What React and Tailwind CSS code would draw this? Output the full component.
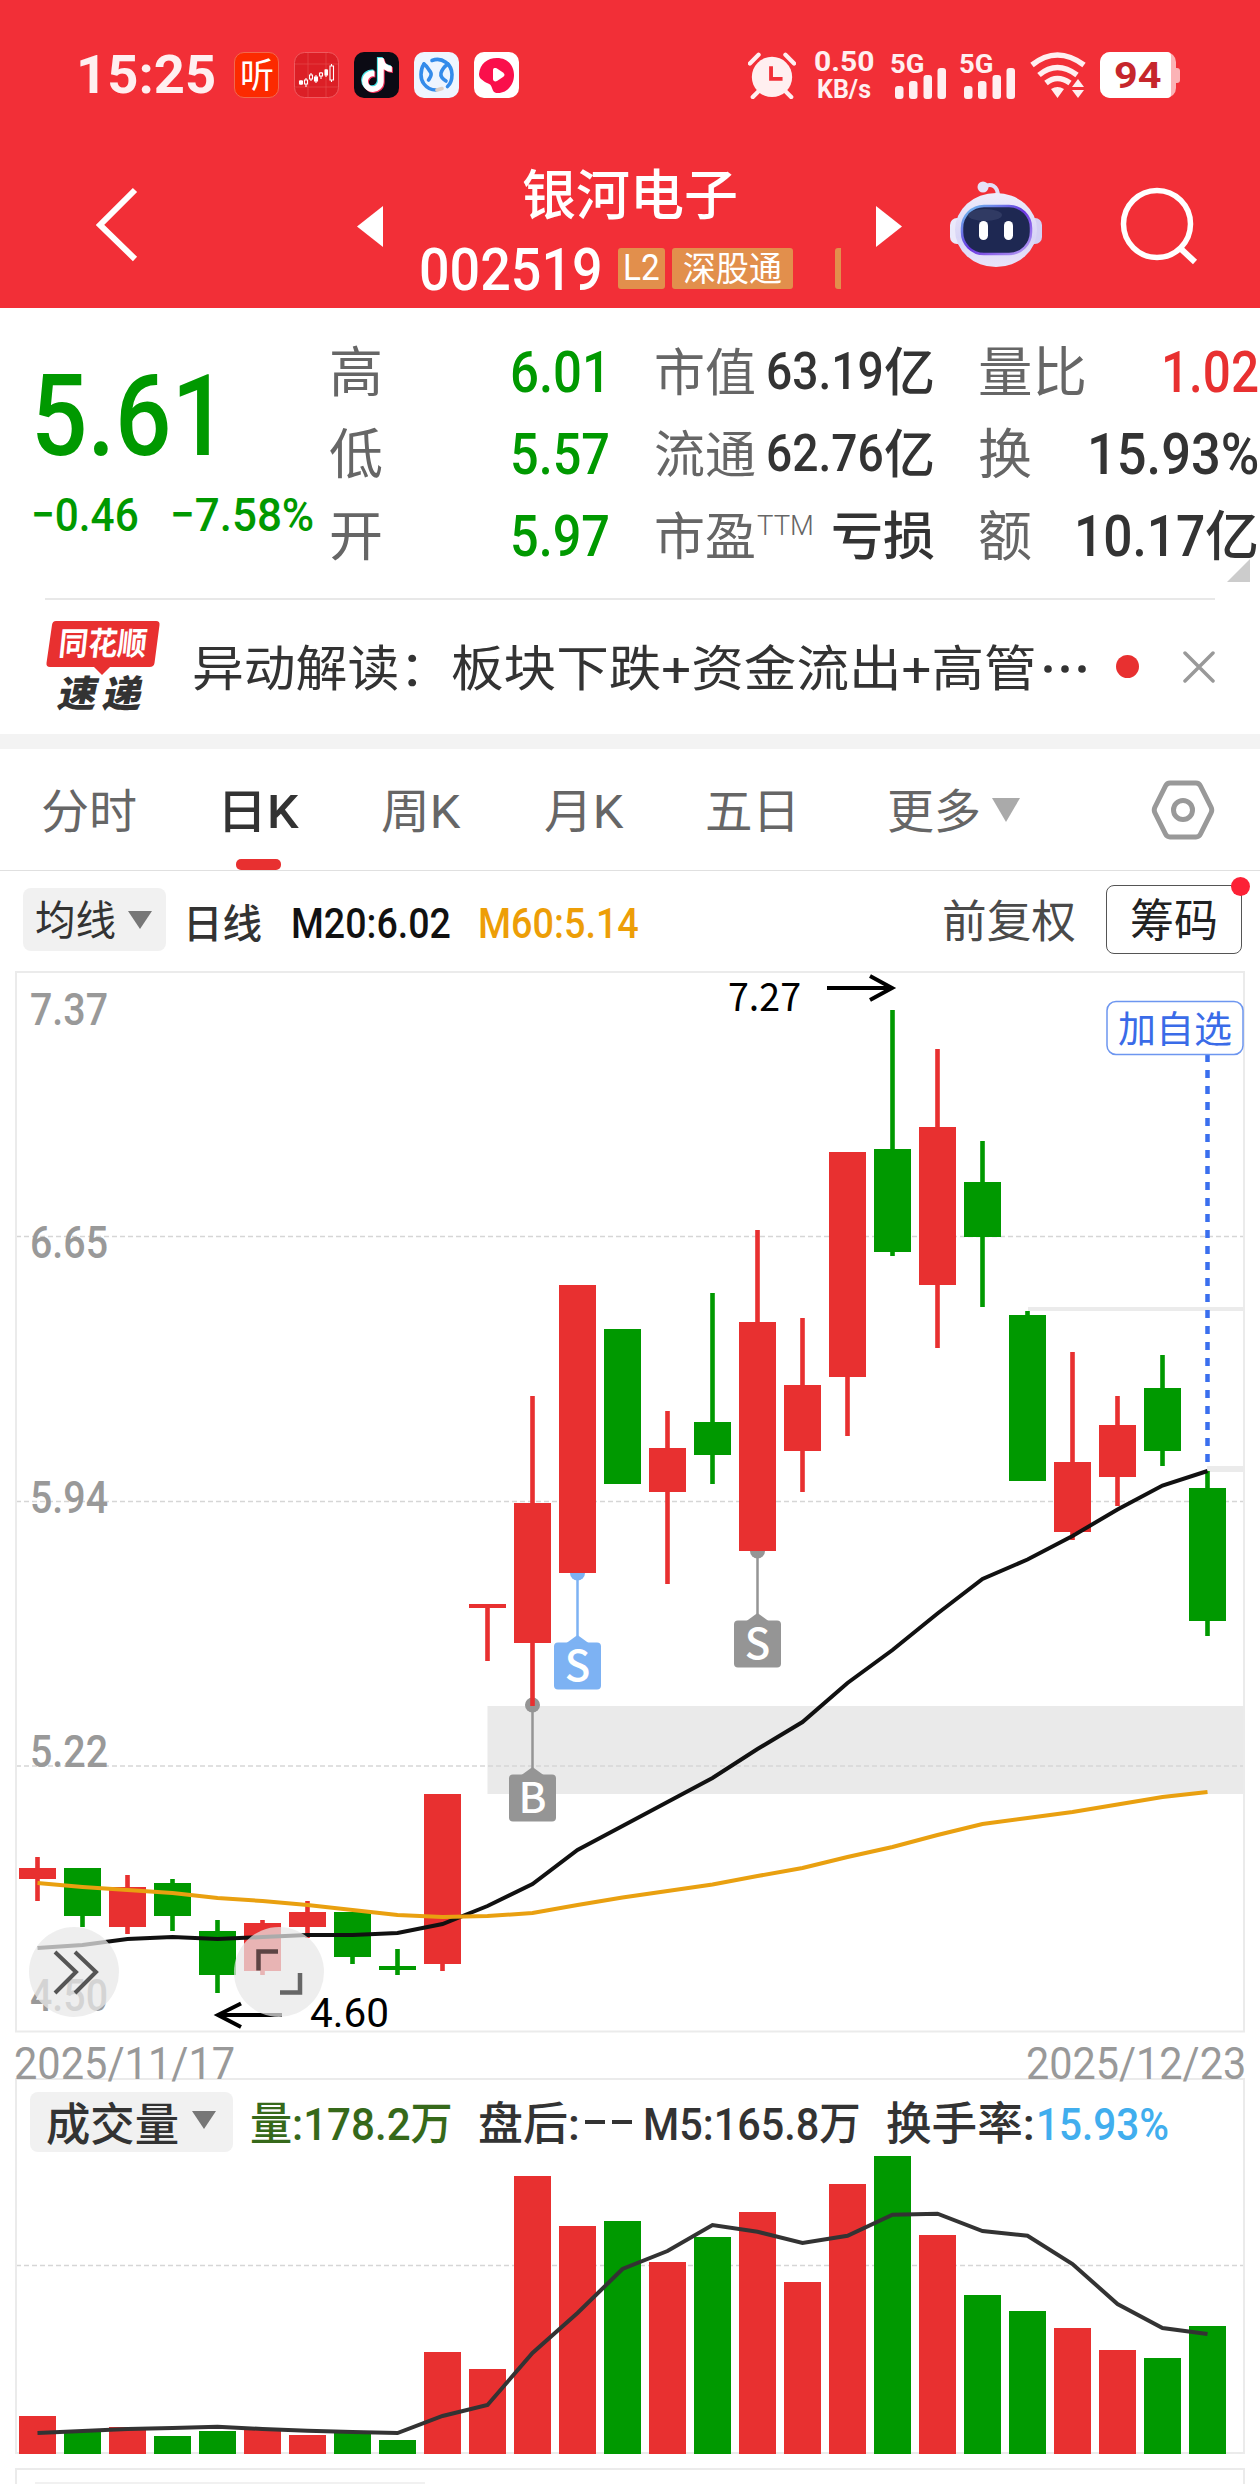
import { useLayoutEffect, useRef } from 'react'
import { FaTiktok } from 'react-icons/fa6'

const RED = '#e83030'
const GREEN = '#009900'

/* [up, bodyTop, bodyBottom, high, low] */
const CANDLES = [
  [1, 1868, 1879, 1857, 1901],
  [0, 1868, 1916, 1868, 1927],
  [1, 1887, 1927, 1875, 1934],
  [0, 1883, 1916, 1879, 1931],
  [0, 1931, 1975, 1920, 1993],
  [1, 1923, 1971, 1920, 1975],
  [1, 1912, 1927, 1901, 1938],
  [0, 1912, 1957, 1912, 1964],
  [0, 1966, 1970, 1949, 1975],
  [1, 1794, 1964, 1794, 1971],
  [1, 1604, 1608, 1604, 1661],
  [1, 1503, 1643, 1396, 1706],
  [1, 1285, 1573, 1285, 1573],
  [0, 1329, 1484, 1329, 1484],
  [1, 1448, 1492, 1411, 1584],
  [0, 1422, 1455, 1293, 1484],
  [1, 1322, 1551, 1230, 1551],
  [1, 1385, 1451, 1318, 1492],
  [1, 1152, 1377, 1152, 1436],
  [0, 1149, 1252, 1010, 1256],
  [1, 1127, 1285, 1049, 1348],
  [0, 1182, 1237, 1141, 1307],
  [0, 1315, 1481, 1311, 1481],
  [1, 1462, 1532, 1352, 1540],
  [1, 1425, 1477, 1396, 1506],
  [0, 1388, 1451, 1355, 1466],
  [0, 1488, 1621, 1471, 1636],
]

const MA20 = [1948, 1945, 1939, 1937, 1939, 1937, 1935, 1935, 1933, 1924, 1906, 1884, 1850, 1826, 1802, 1778, 1749, 1722, 1683, 1650, 1613.5, 1579, 1559.5, 1536, 1509.5, 1485.5, 1471]
const MA60 = [1883, 1887, 1890, 1893, 1898, 1901, 1905, 1910, 1915, 1917, 1916, 1913, 1905, 1897.5, 1891, 1884.5, 1876, 1868, 1857, 1847, 1835, 1824, 1818, 1812, 1804.5, 1797, 1792]
const VOLUME = [2416, 2432, 2427, 2436, 2431, 2430, 2435, 2433, 2440, 2352, 2369, 2176, 2226, 2221, 2262, 2237, 2212, 2282, 2184, 2156, 2235, 2295, 2311, 2328, 2350, 2358, 2326]
const VOL_MA5 = [2433, 2431, 2429, 2428, 2426.7, 2429, 2430.7, 2432, 2433, 2416, 2405, 2353, 2313, 2269, 2251, 2225, 2231.7, 2243, 2235.7, 2214.7, 2213.7, 2231, 2235.7, 2264, 2304, 2328, 2334]

const cx = i => 37.5 + 45 * i
const toPoints = ys => ys.map((y, i) => `${cx(i)},${y}`).join(' ')

/* Condenses or stretches one line of text to the width of its box */
function Fit({ className, children }) {
  const box = useRef(null)
  const line = useRef(null)

  useLayoutEffect(() => {
    const k = box.current.clientWidth / line.current.offsetWidth
    line.current.style.transform = `scaleX(${k})`
  }, [children])

  return (
    <span ref={box} className={`block shrink-0 ${className}`}>
      <span ref={line} className="inline-block origin-left whitespace-nowrap">{children}</span>
    </span>
  )
}

function Signal() {
  return (
    <div className="relative w-[55px] h-[46px]">
      <Fit className="w-[34px] -ml-[2px] text-[25px] font-bold">5G</Fit>
      <svg className="absolute left-0 top-0" width="55" height="48" fill="#ffeff0">
        <rect x="3" y="34" width="8.5" height="13" rx="3" />
        <rect x="17" y="29" width="8.5" height="18" rx="3" />
        <rect x="31.5" y="23" width="8.5" height="24" rx="3" />
        <rect x="45.5" y="16" width="8.5" height="31" rx="3" />
      </svg>
    </div>
  )
}

function StatusBar() {
  return (
    <div className="flex items-center h-[52px] mt-[49px] pl-[76px] text-[#ffeff0]">
      <Fit className="w-[140px] text-[54px] font-bold">15:25</Fit>

      <div className="flex ml-[18px] gap-[15px]">
        <div className="flex items-center justify-center w-[45px] h-[46px] rounded-[10px] bg-[#fc2a00] border border-[#f2684e]">
          <Fit className="w-[34px] pt-[2px] text-[35px] text-white">听</Fit>
        </div>
        <svg width="45" height="46" viewBox="0 0 45 46">
          <rect x=".5" y=".5" width="44" height="45" rx="10" fill="#dc1f26" stroke="#ef5a5f" />
          <path d="M1 12h43M1 35h43M14 1v44M32 1v44" stroke="#e5474c" strokeWidth=".7" />
          <g stroke="#fff" strokeWidth="1.1" fill="#dc1f26">
            <path d="M7 28v5M12 26v9M17 21v8M22 23v8M27 20v7M32 17v8M37.500 12v18" />
            <path d="M5.500 29h3v3h-3zM20.500 25h3v4h-3zM31 18h2.500v5H31z" fill="#fff" />
            <path d="M10.500 28h3v4h-3zM15.500 23h3v4h-3zM25.500 21h3v3h-3zM36 14h3.500v14H36z" />
          </g>
        </svg>
        <div className="relative w-[45px] h-[46px] rounded-[10px] bg-[#0b0a14]">
          <FaTiktok size={34} className="absolute left-[5px] top-[5px] text-[#45e4e6]" />
          <FaTiktok size={34} className="absolute left-[7px] top-[7px] text-[#f5305a]" />
          <FaTiktok size={34} className="absolute left-[6px] top-[6px] text-white" />
        </div>
        <svg width="45" height="46" viewBox="0 0 45 46" fill="none" strokeWidth="3.600" strokeLinecap="round">
          <rect width="45" height="46" rx="10" fill="#eef5ff" />
          <path d="M18 8.500c10-4 20 4 20 14 0 5-1 9-4.500 12M10 12c-4 6-4 15 0 20 3 4 7 6 12 6" stroke="#348bea" />
          <path d="M10 12c3 2 4 5 6.500 8 2 3 0 5-2 8M34 12c-3 2-6 6-7 9-1 4 2 6 5 8" stroke="#348bea" />
          <path d="M23 38l5-1.500" stroke="#dccfc5" />
        </svg>
        <svg width="45" height="46" viewBox="0 0 45 46">
          <rect width="45" height="46" rx="10" fill="#fff" />
          <path d="M23 6c11 0 17 8 17 17 0 10-7 18-16 18-4 0-5-2-6-5-1-4-3-4-7-6-4-3-6-4-6-8C6 12 13 6 23 6z" fill="#fa0f4b" />
          <path d="M19 18c0-2 2-2.500 4-1.500l6 4c2 1.500 2 3 0 4.500l-6 4c-2 1-4 0-4-2z" fill="#fff" />
        </svg>
      </div>

      <svg className="ml-[229px]" width="48" height="48" viewBox="0 0 50 48" fill="#ffeff0">
        <ellipse cx="25" cy="26" rx="21" ry="21" />
        <path d="M2 12L11 3M48 12L39 3M11 41l-6 6M39 41l6 6" stroke="#ffeff0" strokeWidth="4.500" strokeLinecap="round" />
        <path d="M24 15v13h12" fill="none" stroke="#f22f37" strokeWidth="4" />
      </svg>

      <div className="flex flex-col items-center gap-[4px] ml-[18px] pt-[2px]">
        <Fit className="w-[60px] text-[28px] leading-[24px] font-bold">0.50</Fit>
        <Fit className="w-[54px] text-[25px] leading-[24px] font-bold">KB/s</Fit>
      </div>

      <div className="flex gap-[14px] ml-[18px]">
        <Signal />
        <Signal />
      </div>

      <svg className="ml-[13px]" width="58" height="48" viewBox="0 0 58 48" fill="none" stroke="#ffeff0" strokeWidth="5.500">
        <path d="M3 14Q28 -6 55 14M10 24Q28 9 48 24M17 32Q28 23 41 32" />
        <path d="M22 38Q28.500 34 35 38L28.500 47zM43 36L49 28l6 8zM43 39L49 47l6-8z" fill="#ffeff0" stroke="none" />
      </svg>

      <div className="flex items-center ml-[13px]">
        <div className="w-[76px] h-[46px] rounded-[10px] bg-[#fbb3b6]">
          <div className="flex items-center justify-center w-[71px] h-[46px] rounded-l-[10px] rounded-r-[4px] bg-white">
            <Fit className="w-[47px] ml-[4px] text-[37px] font-bold text-[#c6262c]">94</Fit>
          </div>
        </div>
        <div className="w-[4px] h-[15px] rounded-r-[3px] bg-[#fbb3b6]" />
      </div>
    </div>
  )
}

function Robot() {
  return (
    <svg width="94" height="88" viewBox="0 0 94 88">
      <defs>
        <linearGradient id="shell" x1="0" y1="0" x2="0" y2="1">
          <stop offset="0" stopColor="#efecfb" />
          <stop offset=".6" stopColor="#d8d5f6" />
          <stop offset="1" stopColor="#e9e4fa" />
        </linearGradient>
        <linearGradient id="rim" x1="0" y1="0" x2="1" y2="1">
          <stop offset="0" stopColor="#6fc7ef" />
          <stop offset=".5" stopColor="#6a35e0" />
          <stop offset="1" stopColor="#b9a4f5" />
        </linearGradient>
      </defs>
      <path d="M34 7c8-4 15-2 15 10" fill="none" stroke="#e3dff7" strokeWidth="4" />
      <circle cx="34" cy="7" r="5.500" fill="#e6e2f8" />
      <rect x="1" y="38" width="16" height="26" rx="7" fill="#eae9fb" />
      <rect x="77" y="38" width="16" height="26" rx="7" fill="#d3d0f4" />
      <ellipse cx="47" cy="50" rx="41" ry="37" fill="url(#shell)" />
      <rect x="13" y="26" width="69" height="48" rx="22" fill="#1e2852" stroke="url(#rim)" strokeWidth="2.500" />
      <ellipse cx="36" cy="35" rx="17" ry="6" fill="#37416b" opacity=".7" />
      <rect x="30" y="41" width="9" height="19" rx="4.500" fill="#fff" />
      <rect x="55" y="41" width="9" height="19" rx="4.500" fill="#fff" />
    </svg>
  )
}

function TitleBar() {
  return (
    <div className="flex h-[160px] mt-[47px] pl-[96px] text-white">
      <svg className="mt-[39px]" width="42" height="76" viewBox="0 0 42 76">
        <path d="M39 3L4 38l35 34" fill="none" stroke="#fff" strokeWidth="6" />
      </svg>
      <svg className="ml-[219px] mt-[58px]" width="26" height="41">
        <path d="M0 20.500L26 0v41z" fill="#fff" />
      </svg>

      <div className="w-[424px] ml-[36px] pt-[22px]">
        <Fit className="w-[216px] ml-[103px] text-[54px] font-medium">银河电子</Fit>
        <div className="flex items-center h-[42px] mt-[23px]">
          <Fit className="w-[184px] pt-[3px] text-[60px] leading-[42px] font-medium">002519</Fit>
          <div className="flex items-center h-[41px] ml-[15px] px-[5px] rounded-[3px] bg-[#e28f4c]">
            <Fit className="w-[37px] text-[36px]">L2</Fit>
          </div>
          <div className="flex items-center h-[41px] ml-[7px] px-[11px] rounded-[3px] bg-[#e28f4c]">
            <Fit className="w-[99px] pt-[2px] text-[34px]">深股通</Fit>
          </div>
          <div className="w-[6px] h-[41px] ml-[42px] rounded-l-[3px] bg-[#e28f4c]" />
        </div>
      </div>

      <svg className="ml-[33px] mt-[58px]" width="26" height="41">
        <path d="M0 0L26 20.500L0 41z" fill="#fff" />
      </svg>
      <div className="ml-[47px] mt-[32px]">
        <Robot />
      </div>
      <svg className="ml-[77px] mt-[39px]" width="80" height="80" viewBox="0 0 80 80" fill="none" stroke="#fff" strokeWidth="5.500">
        <circle cx="37" cy="37" r="33.500" />
        <path d="M60 61l15 14" strokeWidth="6" />
      </svg>
    </div>
  )
}

function Quote() {
  return (
    <div className="relative flex h-[290px] pt-[22px] text-[#333]">
      <div className="w-[329px] pl-[31px] pt-[30px] text-[#009900]">
        <Fit className="w-[197px] text-[113px] font-medium">5.61</Fit>
        <div className="flex mt-[22px]">
          <Fit className="w-[108px] text-[47px] leading-[40px] font-medium">−0.46</Fit>
          <Fit className="w-[144px] ml-[31px] text-[47px] leading-[40px] font-medium">−7.58%</Fit>
        </div>
      </div>

      <div className="w-[325px]">
        <div className="flex items-center h-[82px]">
          <Fit className="w-[54px] pt-[5px] text-[54px] text-[#666]">高</Fit>
          <Fit className="w-[101px] ml-[127px] pt-[2px] text-[57px] font-medium text-[#009900]">6.01</Fit>
        </div>
        <div className="flex items-center h-[82px]">
          <Fit className="w-[54px] pt-[5px] text-[54px] text-[#666]">低</Fit>
          <Fit className="w-[100px] ml-[127px] pt-[2px] text-[57px] font-medium text-[#009900]">5.57</Fit>
        </div>
        <div className="flex items-center h-[82px]">
          <Fit className="w-[54px] pt-[5px] text-[54px] text-[#666]">开</Fit>
          <Fit className="w-[100px] ml-[127px] pt-[2px] text-[57px] font-medium text-[#009900]">5.97</Fit>
        </div>
      </div>

      <div className="w-[324px]">
        <div className="flex items-center h-[82px]">
          <Fit className="w-[102px] pt-[5px] text-[51px] text-[#666]">市值</Fit>
          <Fit className="w-[118px] ml-[10px] pt-[2px] text-[52px] font-medium">63.19</Fit>
          <Fit className="w-[51px] pt-[5px] text-[52px] font-medium">亿</Fit>
        </div>
        <div className="flex items-center h-[82px]">
          <Fit className="w-[102px] pt-[5px] text-[51px] text-[#666]">流通</Fit>
          <Fit className="w-[118px] ml-[10px] pt-[2px] text-[52px] font-medium">62.76</Fit>
          <Fit className="w-[51px] pt-[5px] text-[52px] font-medium">亿</Fit>
        </div>
        <div className="flex items-center h-[82px]">
          <Fit className="w-[102px] pt-[5px] text-[51px] text-[#666]">市盈</Fit>
          <Fit className="w-[57px] ml-[1px] mb-[18px] text-[28px] font-light text-[#666]">TTM</Fit>
          <Fit className="w-[104px] ml-[17px] pt-[5px] text-[52px] font-medium">亏损</Fit>
        </div>
      </div>

      <div className="w-[282px] pr-[1px]">
        <div className="flex items-center justify-between h-[82px]">
          <Fit className="w-[109px] pt-[5px] text-[54px] text-[#666]">量比</Fit>
          <Fit className="w-[98px] pt-[2px] text-[57px] font-medium text-[#e83030]">1.02</Fit>
        </div>
        <div className="flex items-center justify-between h-[82px]">
          <Fit className="w-[54px] pt-[5px] text-[54px] text-[#666]">换</Fit>
          <Fit className="w-[172px] pt-[2px] text-[57px] font-medium">15.93%</Fit>
        </div>
        <div className="flex items-center h-[82px]">
          <Fit className="w-[54px] pt-[5px] text-[54px] text-[#666]">额</Fit>
          <Fit className="w-[131px] ml-[42px] pt-[2px] text-[57px] font-medium">10.17</Fit>
          <Fit className="w-[54px] pt-[5px] text-[54px] font-medium">亿</Fit>
        </div>
      </div>

      <svg className="absolute left-[1227px] top-[251px]" width="23" height="23">
        <path d="M23 0v23H0z" fill="#ccc" />
      </svg>
    </div>
  )
}

function NewsBar() {
  return (
    <div className="flex h-[134.5px]">
      <div className="relative w-[116px] h-[96px] ml-[45px] mt-[19px]">
        <svg width="116" height="96" viewBox="0 0 116 96">
          <path d="M11 2h100q4 0 3.500 4l-5 38q-.5 4-5 4H65l-8 8-8-8H5q-4 0-3.500-4L7 6q.5-4 4-4z" fill={RED} />
        </svg>
        <div className="absolute left-[14px] top-[9px] -skew-x-6">
          <Fit className="w-[88px] text-[32px] font-bold text-white">同花顺</Fit>
        </div>
        <div className="absolute left-[14px] top-[57px] flex gap-[6px] -skew-x-12 text-[#333]">
          <Fit className="w-[39px] text-[37px] font-black">速</Fit>
          <Fit className="w-[39px] text-[37px] font-black">递</Fit>
        </div>
      </div>
      <div className="flex items-center h-[134px] ml-[31px]">
        <Fit className="w-[259px] pt-[5px] text-[49px] text-[#333]">异动解读：</Fit>
        <Fit className="w-[586px] pt-[5px] text-[49px] text-[#333]">板块下跌+资金流出+高管</Fit>
        <svg className="ml-[4px] mt-[4px]" width="50" height="10" fill="#333">
          <circle cx="7" cy="5" r="3.800" />
          <circle cx="24" cy="5" r="3.800" />
          <circle cx="41" cy="5" r="3.800" />
        </svg>
        <div className="w-[23px] h-[23px] ml-[25px] rounded-full bg-[#e83030]" />
        <svg className="ml-[44px]" width="33" height="32" viewBox="0 0 33 32">
          <path d="M2 2l28 28M30 2L2 30" stroke="#999" strokeWidth="3.500" strokeLinecap="round" />
        </svg>
      </div>
    </div>
  )
}

function Tabs() {
  return (
    <div className="relative flex items-center h-[122px] border-b-[1.500px] border-[#e0e0e0] text-[47px] text-[#666]">
      <Fit className="w-[96px] ml-[41px] pt-[4px]">分时</Fit>
      <Fit className="w-[82px] ml-[80px] pt-[4px] font-medium text-[#333]">日K</Fit>
      <Fit className="w-[80px] ml-[82px] pt-[4px]">周K</Fit>
      <Fit className="w-[80px] ml-[83px] pt-[4px]">月K</Fit>
      <Fit className="w-[95px] ml-[81px] pt-[4px]">五日</Fit>
      <Fit className="w-[94px] ml-[87px] pt-[4px]">更多</Fit>
      <svg className="ml-[11px]" width="28" height="24">
        <path d="M0 0h28L14 24z" fill="#aaa" />
      </svg>
      <svg className="ml-[131px]" width="64" height="60" viewBox="0 0 64 60" fill="none" stroke="#999" strokeWidth="5">
        <path d="M19 3h26q3 0 4.500 3L60 27q1.500 3 0 6L49.500 54q-1.500 3-4.500 3H19q-3 0-4.500-3L4 33q-1.500-3 0-6L14.500 6Q16 3 19 3z" />
        <circle cx="32" cy="30" r="9.500" />
      </svg>
      <div className="absolute left-[236px] top-[110px] w-[45px] h-[11px] rounded-[5px] bg-[#e83030]" />
    </div>
  )
}

function Indicators() {
  return (
    <div className="flex items-center h-[97px] pt-[2px]">
      <div className="flex items-center w-[143px] h-[63px] ml-[23px] -mt-[2px] pl-[12px] rounded-[8px] bg-[#f1f1f1]">
        <Fit className="w-[81px] pt-[4px] text-[41px] text-[#333]">均线</Fit>
        <svg className="ml-[12px]" width="24" height="18">
          <path d="M0 0h24L12 18z" fill="#777" />
        </svg>
      </div>
      <Fit className="w-[79px] ml-[17px] pt-[8px] text-[40px] font-medium text-[#333]">日线</Fit>
      <Fit className="w-[160px] ml-[29px] mt-[6px] text-[42px] font-medium text-[#111]">M20:6.02</Fit>
      <Fit className="w-[161px] ml-[27px] mt-[6px] text-[42px] font-medium text-[#ed9e07]">M60:5.14</Fit>
      <Fit className="w-[134px] ml-[303px] pt-[4px] text-[45px] text-[#4a4a4a]">前复权</Fit>
      <div className="relative flex items-center justify-center w-[136px] h-[69px] ml-[30px] -mt-[2px] rounded-[8px] border border-[#555]">
        <Fit className="w-[88px] pt-[4px] text-[45px] text-[#222]">筹码</Fit>
        <div className="absolute -right-[9px] -top-[9px] w-[19px] h-[19px] rounded-full bg-[#fc2136]" />
      </div>
    </div>
  )
}

function Marker({ i, y, color, children }) {
  const x = cx(i)
  return (
    <g fill={color}>
      <circle cx={x} cy={y} r="7.500" />
      <path d={`M${x} ${y}v64`} stroke={color} strokeWidth="2.500" />
      <path d={`M${x} ${y + 62}l11 8h-22z`} />
      <rect x={x - 23.5} y={y + 69.5} width="47" height="47" rx="4" />
      <text x={x} y={y + 108} textAnchor="middle" fill="#fff" fontSize="42" className="font-['Noto_Sans_CJK_SC',sans-serif] font-medium">{children}</text>
    </g>
  )
}

function Condensed({ x, y, w, size, fill, className, children }) {
  return (
    <text x={x} y={y} fontSize={size} fill={fill} textLength={w} lengthAdjust="spacingAndGlyphs" className={className}>{children}</text>
  )
}

function KLineChart() {
  return (
    <svg className="block overflow-visible" width="1260" height="1072" viewBox="0 968 1260 1072">
      <rect x="487.500" y="1706" width="757" height="88" fill="#eaeaea" />
      <path d="M16 1236.500h1228M16 1501.500h1228M16 1766h1228" stroke="#d6d6d6" strokeWidth="1.300" strokeDasharray="5 3" />
      <rect x="16" y="972" width="1228" height="1059.500" fill="none" stroke="#ebebeb" strokeWidth="2" />
      <path d="M1028 1309h216" stroke="#ebebeb" strokeWidth="4" />
      <path d="M1207 1469h37" stroke="#ebebeb" strokeWidth="6" />

      <g fill="#999" className="font-medium">
        <Condensed x="30" y="1025" w="78" size="45">7.37</Condensed>
        <Condensed x="30" y="1258" w="78" size="45">6.65</Condensed>
        <Condensed x="30" y="1513" w="78" size="45">5.94</Condensed>
        <Condensed x="30" y="1767" w="78" size="45">5.22</Condensed>
        <Condensed x="30" y="2011" w="78" size="45">4.50</Condensed>
      </g>

      <Marker i={11} y={1705} color="#959595">B</Marker>
      <Marker i={12} y={1573} color="#7db2f3">S</Marker>
      <Marker i={16} y={1551} color="#959595">S</Marker>

      {CANDLES.map(([up, top, bottom, high, low], i) => (
        <g key={i} fill={up ? RED : GREEN}>
          <rect x={cx(i) - 2.3} y={high} width="4.600" height={low - high} />
          <rect x={cx(i) - 18.5} y={top} width="37" height={bottom - top} />
        </g>
      ))}

      <path d="M1207.500 1054v414" stroke="#3a6fee" strokeWidth="4.500" strokeDasharray="8 8" />
      <polyline points={toPoints(MA20)} fill="none" stroke="#111" strokeWidth="4" />
      <polyline points={toPoints(MA60)} fill="none" stroke="#e9a010" strokeWidth="4" />

      {/* high and low of the range */}
      <Condensed x="728" y="1011" w="73" size="39" className="font-['Noto_Sans_CJK_SC',sans-serif]">7.27</Condensed>
      <path d="M827 988h65M870 976l22 12-22 12" fill="none" stroke="#000" strokeWidth="4" />
      <Condensed x="310" y="2027" w="79" size="40">4.60</Condensed>
      <path d="M282 2015h-64M241 2003.500L218 2015l23 12" fill="none" stroke="#000" strokeWidth="4" />

      <rect x="1107" y="1001.500" width="136" height="53" rx="9" fill="#fff" stroke="#6d96f0" strokeWidth="1.500" />
      <Condensed x="1118" y="1043" w="114" size="37" fill="#3a6be8" className="font-['Noto_Sans_CJK_SC',sans-serif]">加自选</Condensed>

      {/* floating controls */}
      <circle cx="74" cy="1972" r="45" fill="#e8e8e8" opacity=".75" />
      <path d="M55 1952l21 20-21 21M75 1952l21 20-21 21" fill="none" stroke="#555" strokeWidth="4" />
      <circle cx="279" cy="1972" r="45" fill="#e8e8e8" opacity=".72" />
      <path d="M278 1951.500h-19.500v19" fill="none" stroke="#5c4343" strokeWidth="4.500" />
      <path d="M300 1973v19.500h-20" fill="none" stroke="#666" strokeWidth="4.500" />
    </svg>
  )
}

function Volume() {
  return (
    <div className="w-[1230px] h-[376px] ml-[15px] border-2 border-b-0 border-[#ebebeb]">
      <div className="flex items-center h-[60px] mt-[12px] text-[45px] font-medium text-[#333]">
        <div className="flex items-center w-[203px] h-[60px] ml-[13px] pl-[16px] rounded-[8px] bg-[#f1f1f1]">
          <Fit className="w-[133px] pt-[6px]">成交量</Fit>
          <svg className="ml-[13px] -mt-[4px]" width="24" height="18">
            <path d="M0 0h24L12 18z" fill="#777" />
          </svg>
        </div>
        <Fit className="w-[203px] ml-[17px] pt-[4px] text-[#36691a]">量:178.2万</Fit>
        <Fit className="w-[102px] ml-[25px] pt-[4px]">盘后:</Fit>
        <svg className="ml-[5px]" width="48" height="4">
          <path d="M0 2h20M27 2h20" stroke="#333" strokeWidth="4" />
        </svg>
        <Fit className="w-[218px] ml-[10px] pt-[4px]">M5:165.8万</Fit>
        <Fit className="w-[149px] ml-[25px] pt-[4px]">换手率:</Fit>
        <Fit className="w-[133px] ml-[1px] pt-[4px] text-[#41aeee]">15.93%</Fit>
      </div>
      <svg className="block" width="1226" height="302" viewBox="17 2152 1226 302">
        <path d="M16 2265.500h1228" stroke="#d6d6d6" strokeWidth="1.300" strokeDasharray="5 3" />
        <path d="M16 2453h1228" stroke="#ebebeb" strokeWidth="2" />
        {VOLUME.map((top, i) => (
          <rect key={i} x={cx(i) - 18.5} y={top} width="37" height={2454 - top} fill={CANDLES[i][0] ? RED : GREEN} />
        ))}
        <polyline points={toPoints(VOL_MA5)} fill="none" stroke="#333" strokeWidth="4" />
      </svg>
    </div>
  )
}

export default function App() {
  return (
    <div className="w-[1260px] h-[2484px] overflow-hidden bg-white leading-none font-['Roboto','Noto_Sans_CJK_SC',sans-serif]">
      <div className="h-[308px] bg-[#f22f37] flow-root">
        <StatusBar />
        <TitleBar />
      </div>
      <Quote />
      <div className="h-[1.500px] mx-[45px] bg-[#e8e8e8]" />
      <NewsBar />
      <div className="h-[15px] bg-[#f3f3f3]" />
      <Tabs />
      <Indicators />
      <KLineChart />
      <div className="relative z-10 flex justify-between h-[38px] pt-[2px] pl-[14px] pr-[14px] text-[44px] text-[#999]">
        <Fit className="w-[221px]">2025/11/17</Fit>
        <Fit className="w-[220px]">2025/12/23</Fit>
      </div>
      <Volume />
      <div className="w-[1230px] h-[16px] ml-[15px] mt-[14px] pt-[12px] border-2 border-b-0 border-[#ebebeb]">
        <div className="w-[390px] h-[2px] ml-[18px] bg-[#f1f1f1]" />
      </div>
    </div>
  )
}
